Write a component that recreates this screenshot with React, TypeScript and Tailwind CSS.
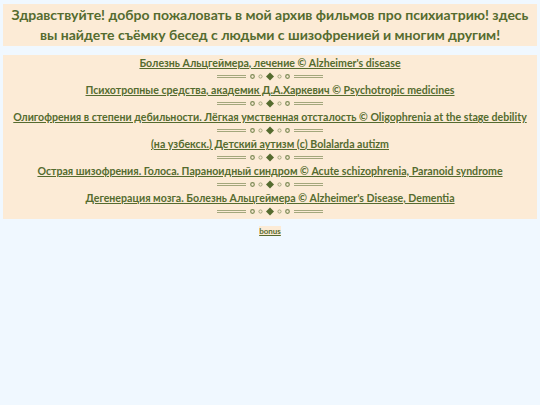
const films = [
  'Болезнь Альцгеймера, лечение © Alzheimer\'s disease',
  'Психотропные средства, академик Д.А.Харкевич © Psychotropic medicines',
  'Олигофрения в степени дебильности. Лёгкая умственная отсталость © Oligophrenia at the stage debility',
  '(на узбекск.) Детский аутизм (c) Bolalarda autizm',
  'Острая шизофрения. Голоса. Параноидный синдром © Acute schizophrenia, Paranoid syndrome',
  'Дегенерация мозга. Болезнь Альцгеймера © Alzheimer\'s Disease, Dementia',
]

function Divider() {
  return (
    <svg width="106" height="9" viewBox="0 0 106 9" className="mx-auto block">
      <g stroke="#a3a77c" strokeWidth="1">
        <line x1="0" y1="3.5" x2="29" y2="3.5" />
        <line x1="0" y1="5.5" x2="29" y2="5.5" />
        <line x1="77" y1="3.5" x2="106" y2="3.5" />
        <line x1="77" y1="5.5" x2="106" y2="5.5" />
      </g>
      <circle cx="35.5" cy="4.5" r="1.8" fill="none" stroke="#7d8a55" strokeWidth="1.2" />
      <circle cx="43.5" cy="4.5" r="1.6" fill="none" stroke="#a3a77c" strokeWidth="1" />
      <path d="M53 0.5 L57 4.5 L53 8.5 L49 4.5 Z" fill="#556b2f" />
      <circle cx="62.5" cy="4.5" r="1.6" fill="none" stroke="#a3a77c" strokeWidth="1" />
      <circle cx="70.5" cy="4.5" r="1.8" fill="none" stroke="#7d8a55" strokeWidth="1.2" />
    </svg>
  )
}

export default function App() {
  return (
    <div
      className="min-h-[405px] bg-[#f0f8ff] px-[3px] pt-[4px] text-[#556b2f]"
      style={{ fontFamily: 'Lato, "Noto Sans", sans-serif' }}
    >
      <header className="bg-[#fcebd6] px-1 py-[1px] text-center text-[14px] font-bold leading-[20px]">
        Здравствуйте! добро пожаловать в мой архив фильмов про психиатрию! здесь
        вы найдете съёмку бесед с людьми с шизофренией и многим другим!
      </header>

      <main className="mt-[9px] bg-[#fcebd6] pt-[1px] pb-[1px] text-center">
        {films.map((title) => (
          <div key={title}>
            <a href="#" className="block text-[10.6px] font-bold leading-[14px] underline">
              {title}
            </a>
            <div className="py-[2px]">
              <Divider />
            </div>
          </div>
        ))}
      </main>

      <div className="mt-[6px] text-center text-[8px] leading-[12px]">
        <a href="#" className="bg-[#fcebd6] font-bold underline">
          bonus
        </a>
      </div>
    </div>
  )
}
